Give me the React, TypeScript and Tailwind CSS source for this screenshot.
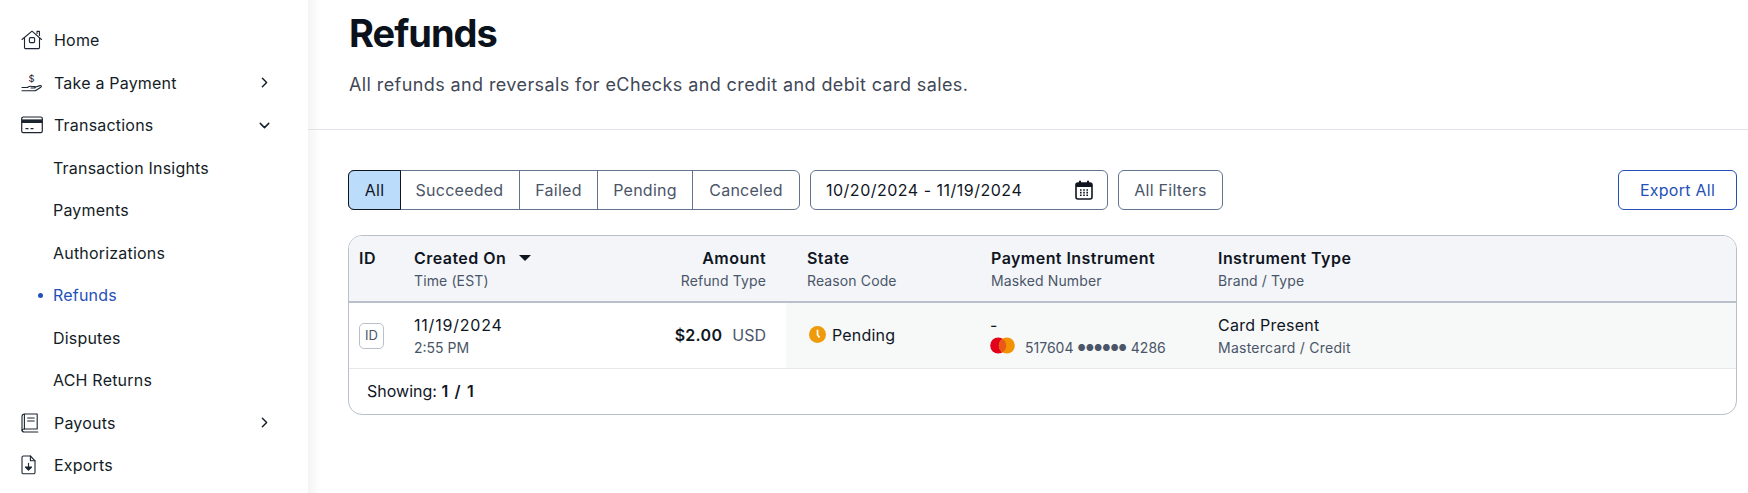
import { ChevronDown, ChevronRight } from "lucide-react";
import React from "react";

const HomeIcon = () => (
  <svg width="22" height="20" viewBox="0 0 22 20" fill="none" stroke="#1c2430" strokeWidth="1.1" strokeLinejoin="round" strokeLinecap="round">
    <path d="M1 9.5 11 1.2l9.5 8.3" />
    <path d="M3.5 8v9.6a1 1 0 0 0 1 1h13a1 1 0 0 0 1-1V8" />
    <path d="M16 3.4V1.4h2.4v4" />
    <rect x="8.4" y="7.6" width="5.2" height="5" rx="1" />
  </svg>
);

const HandIcon = () => (
  <svg width="22" height="20" viewBox="0 0 22 20" fill="none" stroke="#1c2430" strokeWidth="1.1" strokeLinecap="round" strokeLinejoin="round">
    <path d="M1 14.5h5.5c1.5-1.4 3-1.6 4.5-1h2.6c.9 0 .9 1.5 0 1.5H10" />
    <path d="M13.8 14.2 19 12.6c1.4-.3 1.9 1 .8 1.7l-4.6 3c-.6.4-1.2.5-1.9.5H1" />
    <text x="10.6" y="9" fontSize="9.5" textAnchor="middle" fill="#1c2430" stroke="none" fontFamily="Inter, sans-serif">$</text>
  </svg>
);

const CardIcon = () => (
  <svg width="22" height="18" viewBox="0 0 22 18" fill="none">
    <rect x="0.7" y="1" width="20.6" height="15.6" rx="1.6" stroke="#1c2430" strokeWidth="1.2" />
    <rect x="0.7" y="3.4" width="20.6" height="3.6" fill="#1c2430" />
    <path d="M4.5 12.6h3M9.5 12.6h3" stroke="#1c2430" strokeWidth="1.1" />
  </svg>
);

const BookIcon = () => (
  <svg width="18" height="20" viewBox="0 0 18 20" fill="none" stroke="#1c2430" strokeWidth="1.1" strokeLinejoin="round" strokeLinecap="round">
    <path d="M3.6 1h12.6v15H3a2 2 0 0 0-2 1.6V3.4C1 2 2.2 1 3.6 1Z" />
    <path d="M3.4 1.2V16" />
    <path d="M1 17c0 1.2 1 2 2.2 2h13.6" />
    <path d="M6.6 5h6.6M6.6 8h6.6" />
  </svg>
);

const ExportIcon = () => (
  <svg width="15" height="20" viewBox="0 0 15 20" fill="none" stroke="#1c2430" strokeWidth="1.1" strokeLinejoin="round" strokeLinecap="round">
    <path d="M2.4 1h7l4.6 4.8v11.6a1.4 1.4 0 0 1-1.4 1.4H2.4A1.4 1.4 0 0 1 1 17.4V2.4A1.4 1.4 0 0 1 2.4 1Z" />
    <path d="M9.4 1v4.8H14" />
    <path d="M7.5 8.4v5" />
    <path d="M4.4 12h6.2l-3.1 3.2Z" fill="#1c2430" />
  </svg>
);

const CalendarIcon = () => (
  <svg width="18" height="20" viewBox="0 0 18 20" fill="none">
    <rect x="1" y="3" width="16" height="16" rx="2" stroke="#0f1620" strokeWidth="1.6" />
    <rect x="1" y="3" width="16" height="4" fill="#0f1620" />
    <path d="M5 .8v3M13 .8v3" stroke="#0f1620" strokeWidth="2" />
    <path d="M5 10h1.6M8.2 10h1.6M11.4 10h1.6M5 12.6h1.6M8.2 12.6h1.6M11.4 12.6h1.6M5 15.2h1.6M8.2 15.2h1.6M11.4 15.2h1.6" stroke="#0f1620" strokeWidth="1.6" />
  </svg>
);

const ClockBadge = () => (
  <svg width="17" height="17" viewBox="0 0 17 17">
    <circle cx="8.5" cy="8.5" r="8.5" fill="#ef9a0b" />
    <path d="M8.5 3.8v5l2 2.6" fill="none" stroke="#fff" strokeWidth="1.7" />
  </svg>
);

const MastercardLogo = () => (
  <svg width="25" height="17" viewBox="0 0 25 17" className="mb-[4px]">
    <circle cx="8.2" cy="8.5" r="8" fill="#e2001a" />
    <circle cx="16.8" cy="8.5" r="8" fill="#f39200" />
    <path d="M12.5 1.75a8 8 0 0 1 0 13.5 8 8 0 0 1 0-13.5Z" fill="#e8591a" />
  </svg>
);

const navItems = [
  { label: "Home", icon: <HomeIcon /> },
  { label: "Take a Payment", icon: <HandIcon />, chevron: "right" },
  { label: "Transactions", icon: <CardIcon />, chevron: "down" },
  { label: "Transaction Insights", sub: true },
  { label: "Payments", sub: true },
  { label: "Authorizations", sub: true },
  { label: "Refunds", sub: true, active: true },
  { label: "Disputes", sub: true },
  { label: "ACH Returns", sub: true },
  { label: "Payouts", icon: <BookIcon />, chevron: "right" },
  { label: "Exports", icon: <ExportIcon /> },
];

const tabs = ["Succeeded", "Failed", "Pending", "Canceled"];

function Sidebar() {
  return (
    <aside className="w-[308px] shrink-0 pt-[19px] pl-[21px] pr-[35px]">
      {navItems.map((item) => (
        <div key={item.label} className="flex h-[42.5px] items-center text-[16px] tracking-[0.2px] text-[#141c26]">
          {item.sub ? (
            <div className={`relative pl-[32px] ${item.active ? "text-[#2450b8]" : ""}`}>
              {item.active && <span className="absolute left-[17px] top-[10px] size-[5px] rounded-full bg-[#2450b8]" />}
              {item.label}
            </div>
          ) : (
            <>
              <span className="flex w-[33px] justify-start">{item.icon}</span>
              <span>{item.label}</span>
              {item.chevron === "right" && <ChevronRight className="ml-auto" size={17} strokeWidth={2} />}
              {item.chevron === "down" && <ChevronDown className="ml-auto" size={17} strokeWidth={2} />}
            </>
          )}
        </div>
      ))}
    </aside>
  );
}

function Toolbar() {
  return (
    <div className="flex h-[40px] items-stretch text-[16px] tracking-[0.25px]">
      <div className="flex rounded-[6px] border border-[#64748f] text-[#4a5568]">
        <div className="-m-px flex w-[53px] items-center justify-center rounded-l-[6px] border border-[#10161f] bg-[#bcdcfb] text-[#10161f]">All</div>
        <div className="flex w-[119px] items-center justify-center">{tabs[0]}</div>
        <div className="flex w-[78px] items-center justify-center border-l border-[#64748f]">{tabs[1]}</div>
        <div className="flex w-[95px] items-center justify-center border-l border-[#64748f]">{tabs[2]}</div>
        <div className="flex w-[107px] items-center justify-center border-l border-[#64748f]">{tabs[3]}</div>
      </div>
      <div className="ml-[10px] flex w-[298px] items-center justify-between rounded-[6px] border border-[#64748f] pl-[15px] pr-[14px] tracking-[0.5px] text-[#10161f]">
        <span>10/20/2024 - 11/19/2024</span>
        <CalendarIcon />
      </div>
      <div className="ml-[10px] flex w-[105px] items-center justify-center rounded-[6px] border border-[#64748f] text-[#4a5568]">All Filters</div>
      <div className="ml-auto flex w-[119px] items-center justify-center rounded-[6px] border border-[#2450b8] text-[#2450b8]">Export All</div>
    </div>
  );
}

function HeadCell({ title, sub, className }: { title: React.ReactNode; sub?: string; className?: string }) {
  return (
    <div className={className}>
      <div className="text-[16px] leading-[22px] font-semibold tracking-[0.45px] text-[#10161f]">{title}</div>
      {sub && <div className="mt-[2px] text-[14px] leading-[20px] tracking-[0.12px] text-[#4a5568]">{sub}</div>}
    </div>
  );
}

function RefundsTable() {
  return (
    <div className="mt-[25px] overflow-hidden rounded-[14px] border border-[#b9c0ca]">
      <div className="flex h-[65px] items-center bg-[#f4f5f9]">
        <HeadCell title="ID" className="w-[65px] self-start pl-[10px] pt-[11px]" />
        <HeadCell
          title={
            <span className="flex items-center">
              Created On
              <span className="ml-[13px] size-0 border-x-[6px] border-t-[6px] border-x-transparent border-t-[#10161f]" />
            </span>
          }
          sub="Time (EST)"
          className="w-[245px]"
        />
        <HeadCell title="Amount" sub="Refund Type" className="w-[107px] text-right" />
        <HeadCell title="State" sub="Reason Code" className="ml-[41px] w-[184px]" />
        <HeadCell title="Payment Instrument" sub="Masked Number" className="w-[227px]" />
        <HeadCell title="Instrument Type" sub="Brand / Type" />
      </div>
      <div className="flex h-[68px] items-stretch border-t-2 border-b border-t-[#b9c0ca] border-b-[#e6e8eb]">
        <div className="flex w-[65px] items-center pl-[10px]">
          <span className="flex h-[26px] w-[25px] items-center justify-center rounded-[5px] border border-[#b9c0ca] text-[13px] text-[#4a5568]">ID</span>
        </div>
        <div className="flex w-[245px] flex-col justify-center">
          <div className="text-[16px] leading-[22px] tracking-[0.8px] text-[#10161f]">11/19/2024</div>
          <div className="mt-[2px] text-[14px] leading-[20px] text-[#4a5568]">2:55 PM</div>
        </div>
        <div className="flex w-[107px] items-center justify-end pb-[2px]">
          <span className="font-semibold tracking-[0.3px] text-[#10161f]">$2.00</span>
          <span className="ml-[10px] text-[#4a5568]">USD</span>
        </div>
        <div className="ml-[20px] flex flex-1 items-stretch bg-[#f7f8f8]">
          <div className="flex w-[204px] items-center gap-[6px] pb-[2px] pl-[23px] text-[16px] tracking-[0.2px] text-[#10161f]">
            <ClockBadge />
            Pending
          </div>
          <div className="flex w-[228px] flex-col justify-center">
            <div className="text-[16px] leading-[22px] text-[#10161f]">-</div>
            <div className="mt-[2px] flex h-[20px] items-center text-[14px] leading-[20px] text-[#4a5568]">
              <MastercardLogo />
              <span className="ml-[10px] flex items-center">
                517604
                <span className="mx-[4px] text-[9px]">●●●●●●</span>
                4286
              </span>
            </div>
          </div>
          <div className="flex flex-col justify-center">
            <div className="text-[16px] leading-[22px] tracking-[0.25px] text-[#10161f]">Card Present</div>
            <div className="mt-[2px] text-[14px] leading-[20px] tracking-[0.25px] text-[#4a5568]">Mastercard / Credit</div>
          </div>
        </div>
      </div>
      <div className="flex h-[45px] items-center pb-[2px] pl-[18px] text-[16px] text-[#10161f]">
        Showing:&nbsp;<span className="font-semibold tracking-[1.2px]">1 / 1</span>
      </div>
    </div>
  );
}

export default function App() {
  return (
    <div className="flex h-[493px] overflow-hidden bg-white font-['Inter',sans-serif]">
      <Sidebar />
      <main className="min-w-0 flex-1 bg-linear-to-r from-[#f4f4f5] to-white to-[12px]">
        <header className="h-[130px] border-b border-[#dfe2e7] pl-[41px] pt-[9px]">
          <h1 className="text-[38px] leading-[48px] font-bold tracking-[-1px] text-[#0b121c]">Refunds</h1>
          <p className="mt-[15px] text-[18px] leading-[26px] tracking-[0.4px] text-[#3f4856]">All refunds and reversals for eChecks and credit and debit card sales.</p>
        </header>
        <div className="pl-[40px] pr-[11px] pt-[40px]">
          <Toolbar />
          <RefundsTable />
        </div>
      </main>
    </div>
  );
}
